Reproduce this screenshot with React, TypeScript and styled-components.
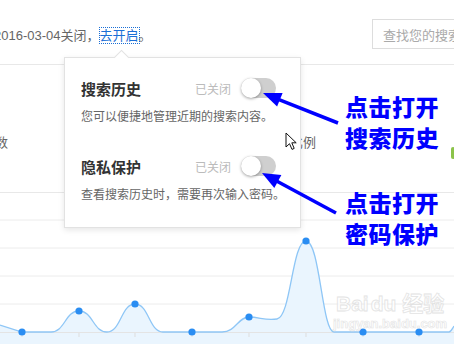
import React from 'react'
import styled, { createGlobalStyle } from 'styled-components'

const GlobalStyle = createGlobalStyle`
  html, body {
    margin: 0;
    padding: 0;
    background: #fff;
  }
  body {
    font-family: "Liberation Sans", "Noto Sans CJK SC", sans-serif;
  }
`

const points = [
  { x: 22, y: 139 },
  { x: 79, y: 118 },
  { x: 135, y: 111 },
  { x: 192, y: 139 },
  { x: 249, y: 124 },
  { x: 306, y: 48 },
  { x: 363, y: 139 },
  { x: 419, y: 139 },
]
const labels = ['03-03', '03-05', '03-07', '03-09', '03-11', '03-13', '03-15', '03-17']

const curve =
  'M0,132 L22,139 L51,139 C65,139 65,118 79,118 C93,118 93,139 107,139 ' +
  'C121,139 121,111 135,111 C149,111 149,139 163,139 L222,139 ' +
  'C236,139 238,124 249,124 C260,124 265,128 277,126 C291,124 292,48 306,48 ' +
  'C320,48 322,139 334,139 L449,139 C451,139 452,136 454,133'

export default function App() {
  return (
    <Page>
      <GlobalStyle />
      <TopBar>
        <Notice>
          2016-03-04关闭，<Link>去开启</Link>。
        </Notice>
        <SearchBox>查找您的搜索</SearchBox>
      </TopBar>

      <MiddleRow>
        <LeftLabel>指数</LeftLabel>
        <RightLabel>比例</RightLabel>
      </MiddleRow>

      <Chart width="454" height="151" viewBox="0 0 454 151">
        {[27, 55, 83, 111].map((y) => (
          <line key={y} x1="0" x2="454" y1={y} y2={y} stroke="#ececec" strokeWidth="1" />
        ))}
        <path d={curve + ' L454,151 L0,151 Z'} fill="#eaf5fe" />
        <line x1="0" x2="454" y1="139.5" y2="139.5" stroke="#e4e4e4" />
        <path d={curve} fill="none" stroke="#8ec6f6" strokeWidth="1.3" />
        {points.map((p, i) => (
          <g key={i}>
            <line x1={p.x} x2={p.x} y1="140" y2="144" stroke="#ddd" />
            <circle cx={p.x} cy={p.y} r="3.6" fill="#2a8df2" />
            <text x={p.x} y="160" fontSize="11" fill="#888" textAnchor="middle" fontFamily="Liberation Sans, sans-serif">
              {labels[i]}
            </text>
          </g>
        ))}
      </Chart>

      <Watermark>
        <WmLogo>Bai<WmPaw>du</WmPaw> 经验</WmLogo>
        <WmUrl>jingyan.baidu.com</WmUrl>
      </Watermark>

      <Popup>
        <Caret />
        <Section>
          <TitleRow>
            <Title>搜索历史</Title>
            <State>已关闭</State>
            <Toggle><Knob /></Toggle>
          </TitleRow>
          <Desc>您可以便捷地管理近期的搜索内容。</Desc>
        </Section>
        <Section $gap>
          <TitleRow>
            <Title>隐私保护</Title>
            <State>已关闭</State>
            <Toggle><Knob /></Toggle>
          </TitleRow>
          <Desc>查看搜索历史时，需要再次输入密码。</Desc>
        </Section>
      </Popup>

      <Cursor width="13" height="19" viewBox="0 0 13 19">
        <path d="M1,1 L1,15 L4.5,11.7 L7,17.4 L9.2,16.4 L6.8,10.8 L11.2,10.8 Z" fill="#fff" stroke="#111" strokeWidth="1" strokeLinejoin="round" />
      </Cursor>

      <Arrows width="454" height="346" viewBox="0 0 454 346">
        <line x1="338" y1="123" x2="279" y2="99.7" stroke="#0000ff" strokeWidth="3.5" />
        <polygon points="263,93 282.6,93 277.1,106.5" fill="#0000ff" />
        <line x1="336" y1="213" x2="277" y2="181.2" stroke="#0000ff" strokeWidth="3.5" />
        <polygon points="262,173 281.4,175 274.3,188" fill="#0000ff" />
      </Arrows>

      <Note $top={91}>点击打开<br />搜索历史</Note>
      <Note $top={187}>点击打开<br />密码保护</Note>
      <EdgeMark />
    </Page>
  )
}

const Page = styled.div`
  position: relative;
  width: 454px;
  height: 346px;
  overflow: hidden;
  background: #fff;
`

const TopBar = styled.div`
  height: 65px;
  padding-top: 4px;
  box-sizing: border-box;
  border-bottom: 1px solid #e8e8e8;
  display: flex;
  align-items: center;
  justify-content: space-between;
`

const Notice = styled.div`
  margin-left: -6px;
  font-size: 13px;
  color: #666;
  white-space: nowrap;
`

const Link = styled.span`
  color: #1a6fd6;
  outline: 1px dotted #1a6fd6;
  outline-offset: 0;
`

const SearchBox = styled.div`
  width: 100px;
  height: 30px;
  margin-right: -18px;
  box-sizing: border-box;
  border: 1px solid #ddd;
  padding-left: 10px;
  display: flex;
  align-items: center;
  font-size: 13px;
  color: #aaa;
  white-space: nowrap;
  overflow: hidden;
`

const MiddleRow = styled.div`
  height: 128px;
  border-bottom: 1px solid #e8e8e8;
  display: flex;
  align-items: center;
  padding-top: 26px;
  box-sizing: border-box;
  font-size: 13px;
  color: #666;
`

const LeftLabel = styled.span`
  margin-left: -18px;
`

const RightLabel = styled.span`
  margin-left: auto;
  margin-right: 138px;
`

const Chart = styled.svg`
  display: block;
`

const Popup = styled.div`
  position: absolute;
  left: 64px;
  top: 57px;
  width: 237px;
  height: 171px;
  box-sizing: border-box;
  background: #fff;
  border: 1px solid #e2e2e2;
  box-shadow: 0 2px 6px rgba(0, 0, 0, 0.1);
  padding: 19px 24px 0 16px;
`

const Caret = styled.div`
  position: absolute;
  left: 51px;
  top: -6px;
  width: 10px;
  height: 10px;
  background: #fff;
  border-left: 1px solid #e2e2e2;
  border-top: 1px solid #e2e2e2;
  transform: rotate(45deg);
`

const Section = styled.div<{ $gap?: boolean }>`
  margin-top: ${(p) => (p.$gap ? '29px' : '0')};
`

const TitleRow = styled.div`
  height: 22px;
  display: flex;
  align-items: center;
`

const Title = styled.div`
  flex: 1;
  font-size: 15px;
  font-weight: bold;
  color: #333;
`

const State = styled.div`
  font-size: 12px;
  color: #bbb;
  margin-right: 10px;
`

const Toggle = styled.div`
  position: relative;
  width: 35px;
  height: 20px;
  border-radius: 10px;
  background: #cfcfcf;
`

const Knob = styled.div`
  position: absolute;
  left: 0;
  top: 0;
  width: 20px;
  height: 20px;
  border-radius: 50%;
  background: #fff;
  box-shadow: 0 1px 3px rgba(0, 0, 0, 0.35);
`

const Desc = styled.div`
  margin-top: 9px;
  font-size: 12px;
  line-height: 18px;
  color: #666;
  white-space: nowrap;
`

const Cursor = styled.svg`
  position: absolute;
  left: 285px;
  top: 132px;
`

const Arrows = styled.svg`
  position: absolute;
  left: 0;
  top: 0;
  pointer-events: none;
`

const Note = styled.div<{ $top: number }>`
  position: absolute;
  left: 345px;
  top: ${(p) => p.$top}px;
  font-family: "Noto Sans CJK SC", sans-serif;
  font-size: 23px;
  line-height: 31px;
  font-weight: 900;
  letter-spacing: 0.5px;
  color: #0000ff;
  white-space: nowrap;
`

const Watermark = styled.div`
  position: absolute;
  left: 333px;
  top: 292px;
  display: flex;
  flex-direction: column;
  align-items: center;
  color: #fff;
  -webkit-text-stroke: 0.8px #dedede;
  opacity: 0.85;
`

const WmLogo = styled.div`
  font-family: "Liberation Sans", "Noto Sans CJK SC", sans-serif;
  font-size: 21px;
  font-weight: bold;
  line-height: 24px;
  white-space: nowrap;
`

const WmPaw = styled.span`
  margin-left: 2px;
`

const WmUrl = styled.div`
  font-family: "Liberation Sans", sans-serif;
  font-size: 13px;
  font-weight: bold;
  line-height: 16px;
  -webkit-text-stroke: 0.6px #dedede;
`

const EdgeMark = styled.div`
  position: absolute;
  left: 451px;
  top: 147px;
  width: 4px;
  height: 12px;
  border-radius: 2px;
  background: #8bc34a;
`
